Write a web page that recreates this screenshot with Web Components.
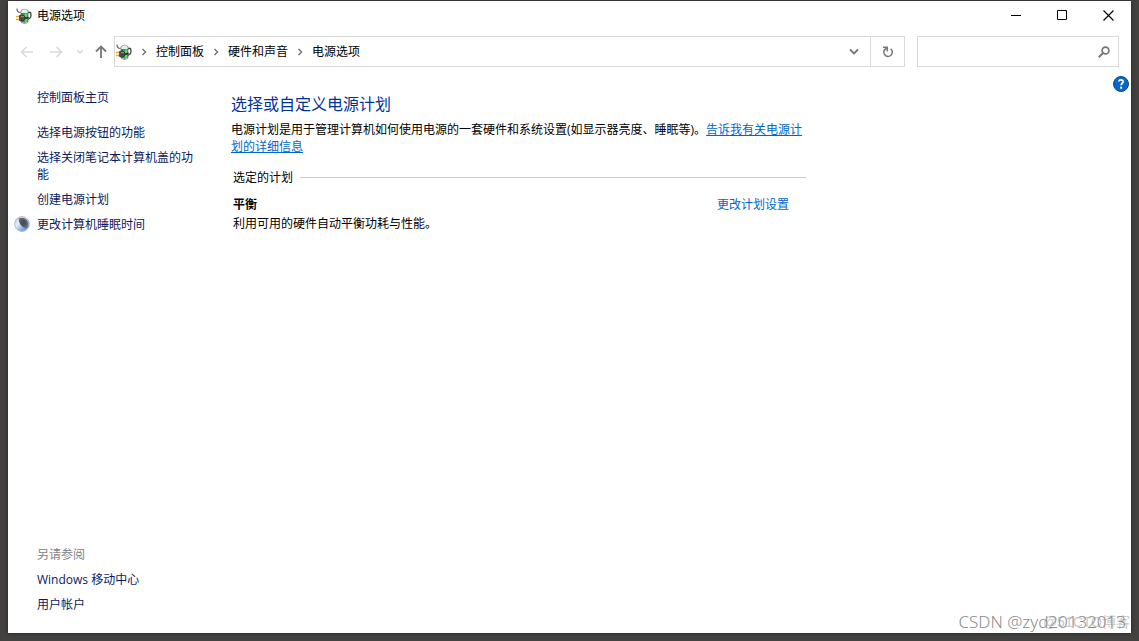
<!DOCTYPE html>
<html lang="zh-CN">
<head>
<meta charset="utf-8">
<title>电源选项</title>
<style>
html, body { height: 100%; }
body {
  margin: 0; box-sizing: border-box; padding: 1px 8px 8px; background: #444240;
  font: 12px/17px "Open Sans", "Noto Sans CJK SC", sans-serif; color: #000;
  display: flex; position: relative;
}
</style>
</head>
<body>
<app-window></app-window>
<water-mark></water-mark>

<script>
const define = (name, html) => {
  const t = document.createElement('template');
  t.innerHTML = html;
  customElements.define(name, class extends HTMLElement {
    constructor() {
      super();
      this.attachShadow({ mode: 'open' }).appendChild(t.content.cloneNode(true));
    }
  });
};

define('power-icon', `
<style>:host{display:block;width:16px;height:16px;flex:none} svg{display:block}</style>
<svg width="16" height="16" viewBox="0 0 16 16" aria-hidden="true">
  <path d="M1 .5C1 3 2 4.500 4.500 4.500" fill="none" stroke="#666" stroke-width="1.200"/>
  <path d="M12 4.500h2.500q1 2.500 0 5L12 11.500" fill="none" stroke="#444" stroke-width="1.300"/>
  <path d="M5 2.500Q8.500 0 12 2.500V14Q8.500 17 5 14Z" fill="#2fa342" stroke="#5a6a5c" stroke-width=".7"/>
  <path d="M5.300 2.700Q8.500 0 11.700 2.700V5H5.300Z" fill="#e6edee"/>
  <path d="M10 5.500v8.500" stroke="#5bdc63" stroke-width="2.200"/>
  <path d="M6 14.500q3 1.500 5.500-.3" stroke="#bcc7bd" fill="none"/>
  <path d="M0 8.500h4M0 11.500h4" stroke="#e8a91c" stroke-width="1.500"/>
  <path d="M3.500 7.500L6.500 6.800l2.500 2v2.700l-2.500 1.700-3-.7Z" fill="#494949" stroke="#252525" stroke-width=".6"/>
  <path d="M5 8.500l3 .3" stroke="#999"/>
  <path d="M9 10h2l1.500-1" stroke="#222" stroke-width="1.300" fill="none"/>
</svg>`);

define('moon-icon', `
<style>:host{display:block;width:16px;height:16px} svg{display:block}</style>
<svg width="16" height="16" viewBox="0 0 16 16" aria-hidden="true">
  <defs>
    <linearGradient id="g" x1="0" y1="0" x2="1" y2="1"><stop offset="0" stop-color="#b7c1cc"/><stop offset=".35" stop-color="#e6f0fc"/><stop offset=".7" stop-color="#7da3f2"/><stop offset="1" stop-color="#5478cc"/></linearGradient>
    <radialGradient id="d"><stop offset=".4" stop-color="#4b5057"/><stop offset="1" stop-color="#686d78"/></radialGradient>
  </defs>
  <circle cx="8" cy="8" r="7.400" fill="url(#g)" stroke="#b4bdc9" stroke-width="1"/>
  <path d="M4.800 2.500C8 .8 12.500 2 13.800 6c.5 3 0 5-1.500 6.300C8 11.500 4.300 7.500 4.800 2.500Z" fill="url(#d)"/>
</svg>`);

define('title-bar', `
<style>
:host{display:flex;height:29px;align-items:center;padding-left:8px}
h1{font:inherit;margin:0 auto 0 5px}
button{border:0;background:none;padding:0;width:46px;height:29px;display:grid;place-items:center}
svg{display:block}
</style>
<power-icon></power-icon><h1><slot></slot></h1>
<button aria-label="最小化"><svg width="10" height="11"><path d="M0 5.500h10" stroke="#000"/></svg></button>
<button aria-label="最大化"><svg width="11" height="11"><path d="M.5.5h9v9h-9z" fill="none" stroke="#000"/></svg></button>
<button aria-label="关闭"><svg width="11" height="11"><path d="M.5.5l10 10M10.500.5l-10 10" stroke="#000" stroke-width="1.100"/></svg></button>`);

define('crumb-item', `
<style>
:host{display:flex;align-items:center;flex:none}
svg{display:block;margin:0 9px}
a{color:#000;text-decoration:none}
</style>
<svg width="6" height="8" viewBox="0 0 6 8" aria-hidden="true"><path d="M1.500 1L4.500 4l-3 3" fill="none" stroke="#777" stroke-width="1.500"/></svg><a href="#"><slot></slot></a>`);

define('nav-bar', `
<style>
:host{display:flex;height:31px;padding:6px 12px 0 10px}
button{border:0;background:none;padding:0;display:grid;place-items:center;height:100%;flex:none}
svg{display:block}
.history{display:grid;grid-template-columns:18px 18px 8px 12px;column-gap:11px;width:96px;flex:none}
.address{flex:1;min-width:0;display:flex;align-items:center;border:1px solid #d9d9d9;box-sizing:border-box;padding-left:1px}
.drop{width:32px;margin-left:auto}
.refresh{width:34px;border-left:1px solid #d9d9d9}
.search{display:flex;align-items:center;width:202px;box-sizing:border-box;border:1px solid #d9d9d9;margin-left:12px}
input{flex:1;min-width:0;border:0;outline:0;background:none;font:inherit;padding:0 8px;height:27px}
.search button{width:28px}
</style>
<div class="history">
  <button aria-label="后退"><svg width="14" height="12"><path d="M13 6H1.500M6.500 1l-5 5 5 5" fill="none" stroke="#d9d9d9" stroke-width="1.500"/></svg></button>
  <button aria-label="前进"><svg width="14" height="12"><path d="M1 6h11.500M7.500 1l5 5-5 5" fill="none" stroke="#d9d9d9" stroke-width="1.500"/></svg></button>
  <button aria-label="最近位置"><svg width="8" height="6"><path d="M1.500 1.500L4 4l2.500-2.500" fill="none" stroke="#d4d4d4" stroke-width="1.500"/></svg></button>
  <button aria-label="上移"><svg width="12" height="13"><path d="M6 13V1.500M1 6.500l5-5 5 5" fill="none" stroke="#777" stroke-width="1.800"/></svg></button>
</div>
<div class="address">
  <power-icon></power-icon>
  <slot></slot>
  <button class="drop" aria-label="展开"><svg width="10" height="7"><path d="M1 1.500l4 4 4-4" fill="none" stroke="#777" stroke-width="1.800"/></svg></button>
  <button class="refresh" aria-label="刷新"><svg width="12" height="12"><path d="M8.600 2.800A4.200 4.200 0 1 1 2.600 3.800L4.800 1.800" fill="none" stroke="#777" stroke-width="1.600"/><path d="M1 1.300h4.300V5.500" fill="none" stroke="#777" stroke-width="1.400"/></svg></button>
</div>
<div class="search"><input type="text" aria-label="搜索"><button aria-label="开始搜索"><svg width="12" height="12"><circle cx="7.500" cy="4.500" r="3.400" fill="none" stroke="#777" stroke-width="1.700"/><path d="M5 7L.8 11.200" stroke="#777" stroke-width="2"/></svg></button></div>`);

define('side-link', `
<style>
:host{display:grid;grid-template-columns:16px 160px;column-gap:7px}
.icon{height:17px}
a{color:#0b1a5e;text-decoration:none}
</style>
<span class="icon"><slot name="icon"></slot></span><a href="#"><slot></slot></a>`);

define('side-nav', `
<style>
:host{display:flex;flex-direction:column;padding:22px 0 20px 6px;box-sizing:border-box}
nav{display:grid;row-gap:8px}
.home{margin-bottom:10px}
.also{margin-top:auto}
h2{font:inherit;color:#838383;margin:0 0 0 23px}
</style>
<nav>
  <side-link class="home">控制面板主页</side-link>
  <side-link>选择电源按钮的功能</side-link>
  <side-link>选择关闭笔记本计算机盖的功能</side-link>
  <side-link>创建电源计划</side-link>
  <side-link><moon-icon slot="icon"></moon-icon>更改计算机睡眠时间</side-link>
</nav>
<nav class="also">
  <h2>另请参阅</h2>
  <side-link>Windows 移动中心</side-link>
  <side-link>用户帐户</side-link>
</nav>`);

define('plan-row', `
<style>
:host{display:flex;padding:10px 17px 0 2px;justify-content:space-between}
h4{font:inherit;font-weight:700;margin:0 0 2px}
p{margin:0}
a{color:#0066cc;text-decoration:none}
</style>
<div><h4><slot name="name"></slot></h4><p><slot></slot></p></div><a href="#">更改计划设置</a>`);

define('plan-panel', `
<style>
:host{display:block;max-width:575px;padding-top:26px}
h2{font-size:16px;line-height:22px;font-weight:400;color:#003399;margin:0 0 6px}
p{margin:0}
a{color:#0066cc}
.group{display:flex;align-items:center;margin:14px 0 0 2px}
.group::after{content:"";flex:1;height:1px;background:#cbcbcb;margin-left:7px}
h3{font:inherit;margin:0}
</style>
<h2>选择或自定义电源计划</h2>
<p>电源计划是用于管理计算机如何使用电源的一套硬件和系统设置(如显示器亮度、睡眠等)。<a href="#">告诉我有关电源计划的详细信息</a></p>
<div class="group"><h3>选定的计划</h3></div>
<plan-row><span slot="name">平衡</span>利用可用的硬件自动平衡功耗与性能。</plan-row>`);

define('help-button', `
<style>
:host{display:block;padding-top:9px}
button{border:0;background:none;padding:0;width:16px;height:16px;display:block}
svg{display:block}
</style>
<button aria-label="帮助"><svg width="16" height="16"><circle cx="8" cy="8" r="7.500" fill="#0868c6" stroke="#0c4a85"/><path d="M5.800 5.500Q6 3.800 8 3.800t2.200 1.800C10.200 7.300 8.100 7.200 8.100 9.300" fill="none" stroke="#fff" stroke-width="1.700"/><path d="M7.100 10.700h2v2h-2z" fill="#fff"/></svg></button>`);

define('app-window', `
<style>
:host{flex:1;min-width:0;display:flex;flex-direction:column;background:#fff;box-shadow:0 0 4px #222}
main{flex:1;display:grid;grid-template-columns:223px minmax(0,1fr) 18px}
</style>
<title-bar>电源选项</title-bar>
<nav-bar><crumb-item>控制面板</crumb-item><crumb-item>硬件和声音</crumb-item><crumb-item>电源选项</crumb-item></nav-bar>
<main><side-nav></side-nav><plan-panel></plan-panel><help-button></help-button></main>`);

define('water-mark', `
<style>
:host{position:absolute;right:9px;bottom:7px;display:grid;justify-items:end;align-items:center;pointer-events:none;white-space:nowrap}
span{grid-area:1/1}
.back{font:14px/24px "Liberation Sans","Noto Sans CJK SC",sans-serif;color:#c9c9c9}
.front{font:300 17px/24px "Noto Sans",sans-serif;color:#8c8c8c;padding-right:4px}
</style>
<span class="back">@51CTO博客</span><span class="front">CSDN @zyd20132013</span>`);
</script>
</body>
</html>
